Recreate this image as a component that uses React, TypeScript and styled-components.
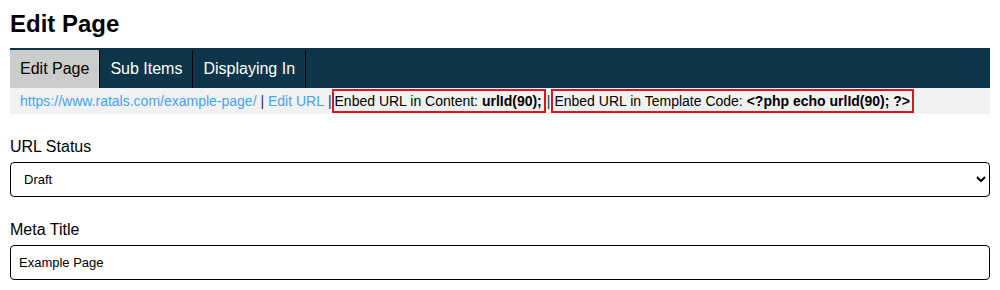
import styled, { createGlobalStyle } from 'styled-components';

const GlobalStyle = createGlobalStyle`
    body {
        margin: 0;
        background: #fff;
        font-family: "Liberation Sans", Arial, sans-serif;
        color: #000;
    }
`;

const Page = styled.div`
    padding: 0 10px;
`;

const Heading = styled.h1`
    font-size: 24px;
    line-height: 28px;
    font-weight: bold;
    margin: 10px 0 10px;
`;

const TabBar = styled.div`
    display: flex;
    background: #0c3549;
    padding-top: 2px;
`;

const Tab = styled.div<{ active?: boolean }>`
    height: 38px;
    line-height: 38px;
    padding: 0 10px;
    font-size: 16px;
    color: ${props => props.active ? '#000' : '#fff'};
    background: ${props => props.active ? '#cccccc' : 'transparent'};
    border-right: 1px solid #000;
    cursor: pointer;
`;

const InfoBar = styled.div`
    display: flex;
    align-items: center;
    background: #f2f2f2;
    height: 26px;
    padding: 0 10px;
    font-size: 14px;
    color: #1b2f5e;
    white-space: pre;
`;

const InfoLink = styled.a`
    color: #42a5f5;
    text-decoration: none;
`;

const Sep = styled.span<{ tight?: boolean }>`
    margin: ${props => props.tight ? '0 1px' : '0'};
`;

const Boxed = styled.span`
    border: 2px solid #e0141e;
    color: #000;
    padding: 1px 2px 1px 1px;
    line-height: 18px;
`;

const FormGroup = styled.div`
    margin-top: 24px;
`;

const Label = styled.label`
    display: block;
    font-size: 16px;
    line-height: 18px;
    margin-bottom: 6px;
`;

const Select = styled.select`
    display: block;
    width: 100%;
    height: 35px;
    box-sizing: border-box;
    border: 1px solid #000;
    border-radius: 4px;
    padding: 0 8px 0 9px;
    font-size: 13px;
    font-family: "Liberation Sans", Arial, sans-serif;
    background: #fff;
    color: #000;
`;

const Input = styled.input`
    display: block;
    width: 100%;
    height: 35px;
    box-sizing: border-box;
    border: 1px solid #000;
    border-radius: 4px;
    padding: 0 8px;
    font-size: 13px;
    font-family: "Liberation Sans", Arial, sans-serif;
    color: #000;
`;

export default function App() {
    return (
        <Page>
            <GlobalStyle />
            <Heading>Edit Page</Heading>
            <TabBar>
                <Tab active>Edit Page</Tab>
                <Tab>Sub Items</Tab>
                <Tab>Displaying In</Tab>
            </TabBar>
            <InfoBar>
                <InfoLink href="#">https://www.ratals.com/example-page/</InfoLink>
                <Sep>{' | '}</Sep>
                <InfoLink href="#">Edit URL</InfoLink>
                <Sep>{' |'}</Sep>
                <Boxed>Enbed URL in Content: <b>urlId(90);</b></Boxed>
                <Sep tight>|</Sep>
                <Boxed>Enbed URL in Template Code: <b>&lt;?php echo urlId(90); ?&gt;</b></Boxed>
            </InfoBar>
            <FormGroup>
                <Label>URL Status</Label>
                <Select defaultValue="draft">
                    <option value="draft">Draft</option>
                    <option value="published">Published</option>
                </Select>
            </FormGroup>
            <FormGroup>
                <Label>Meta Title</Label>
                <Input defaultValue="Example Page" />
            </FormGroup>
        </Page>
    );
}
